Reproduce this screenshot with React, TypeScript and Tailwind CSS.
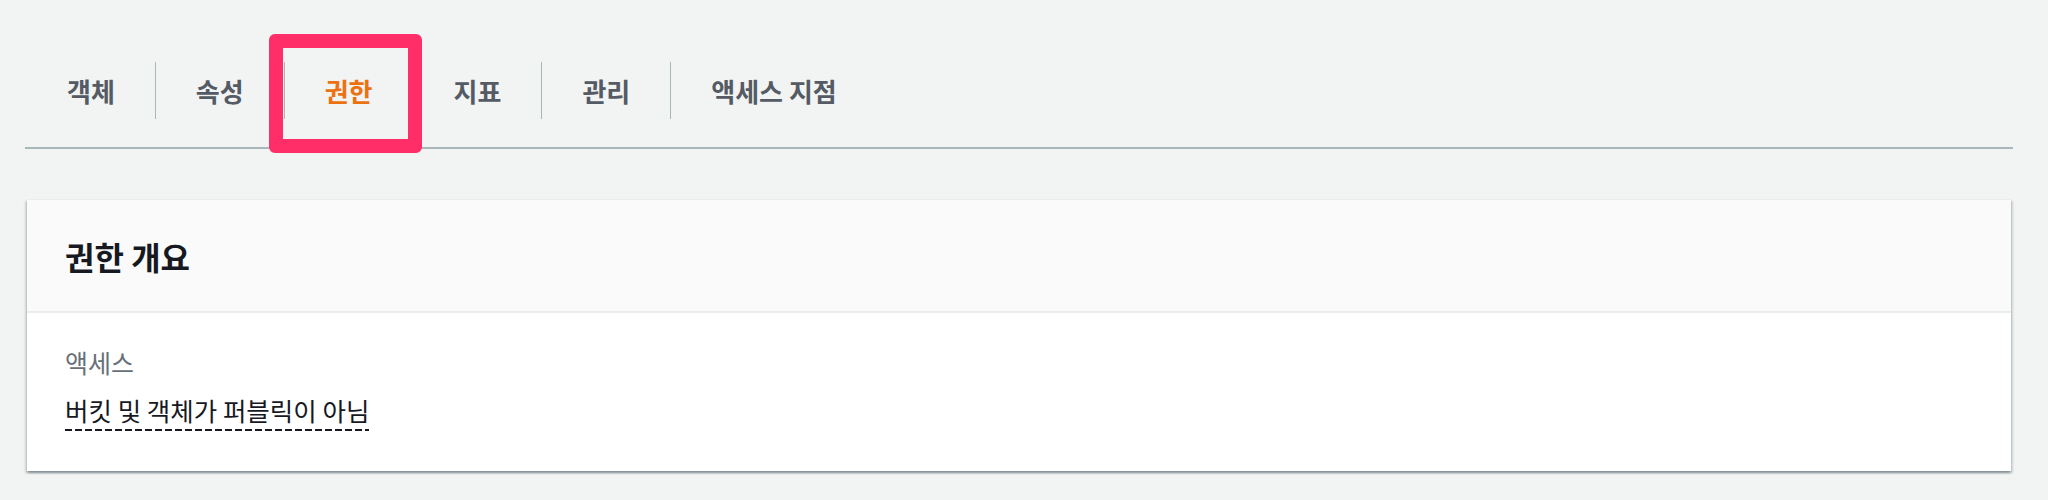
import React from "react";

const tabs = ["객체", "속성", "권한", "지표", "관리", "액세스 지점"];

export default function App() {
  return (
    <div className="min-h-[500px] w-full bg-[#f2f3f3] pl-[25px] pr-[35px] pt-[34px] font-['Noto_Sans_CJK_KR','Noto_Sans',sans-serif]">
      <div className="flex h-[115px] items-stretch border-b-2 border-[#aab7b8] pl-[2px]">
        {tabs.map((t, i) => (
          <React.Fragment key={t}>
            {i > 0 && (
              <div className="flex items-center">
                <div className="h-[57px] w-px bg-[#aab7b8]" />
              </div>
            )}
            <div className="relative flex items-center px-[40px]">
              <span
                className={
                  i === 2
                    ? "text-[26px] font-bold leading-[32px] text-[#ec7211]"
                    : "text-[26px] font-bold leading-[32px] text-[#545b64]"
                }
              >
                {t}
              </span>
              {i === 2 && (
                <div className="absolute left-[-16px] top-0 z-10 h-[119px] w-[153px] rounded-[6px] border-[14px] border-[#ff2e69]" />
              )}
            </div>
          </React.Fragment>
        ))}
      </div>

      <div className="mx-[2px] mt-[50px] border-t border-[#eaeded] bg-white shadow-[0_2px_2px_0_rgba(0,28,36,0.3),2px_2px_2px_0_rgba(0,28,36,0.12),-2px_2px_2px_0_rgba(0,28,36,0.12)]">
        <div className="flex h-[113px] items-center border-b-2 border-[#eaeded] bg-[#fafafa] pl-[38px]">
          <h2 className="text-[32px] font-bold leading-[40px] text-[#16191f]">권한 개요</h2>
        </div>
        <div className="pb-[40px] pl-[38px] pt-[34px]">
          <div className="text-[25px] leading-[30px] text-[#687078]">액세스</div>
          <div className="mt-[18px]">
            <span className="inline-block bg-[repeating-linear-gradient(90deg,#16191f_0_7px,transparent_7px_10px)] bg-[length:100%_2px] bg-bottom bg-no-repeat pb-[6px] text-[25.5px] leading-[30px] text-[#16191f]">
              버킷 및 객체가 퍼블릭이 아님
            </span>
          </div>
        </div>
      </div>
    </div>
  );
}
